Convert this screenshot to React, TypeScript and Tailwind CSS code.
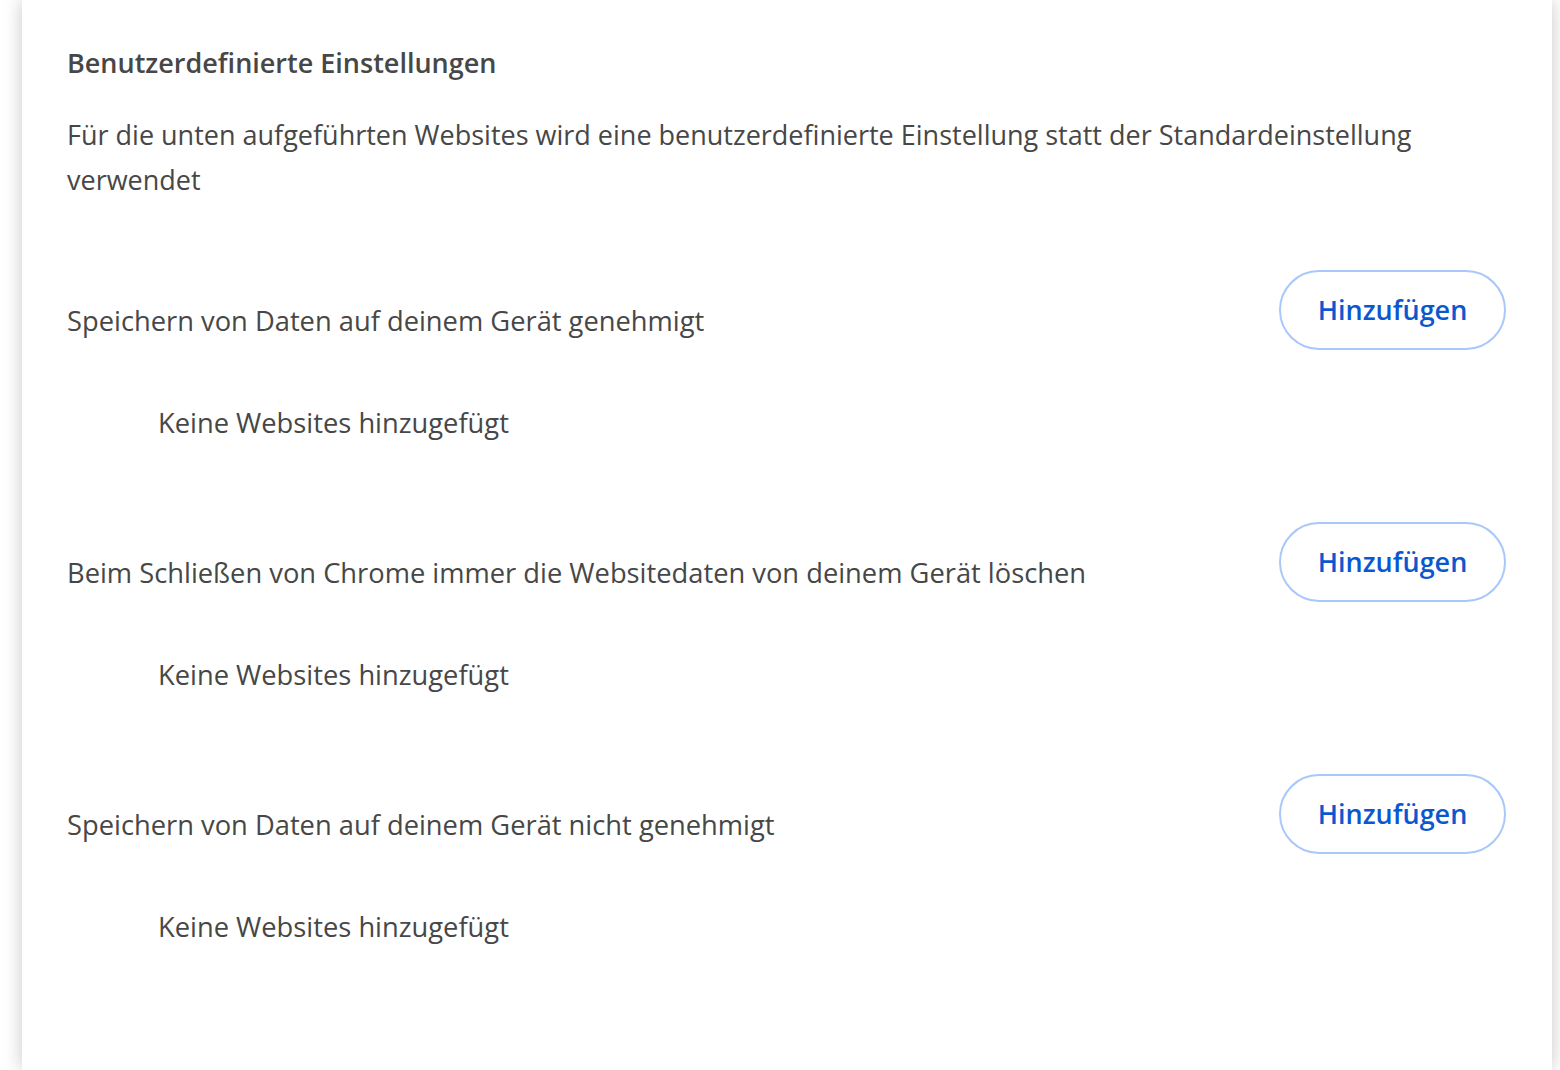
import React from 'react'

const SECTIONS = [
  'Speichern von Daten auf deinem Gerät genehmigt',
  'Beim Schließen von Chrome immer die Websitedaten von deinem Gerät löschen',
  'Speichern von Daten auf deinem Gerät nicht genehmigt',
]

export default function App() {
  return (
    <div
      className="min-h-[1070px] overflow-hidden bg-white pl-[22px] pr-[8px] text-[#474747]"
      style={{ fontFamily: '"Open Sans", "Noto Sans", sans-serif' }}
    >
      <div className="min-h-[1070px] bg-white pl-[45px] pr-[46px] pt-[43px] shadow-[0_0_18px_rgba(0,0,0,0.22)]">
        <h2 className="h-[40px] text-[27px] font-semibold leading-[40px] text-[#474747]">
          Benutzerdefinierte Einstellungen
        </h2>
        <p className="mt-[29px] pr-[60px] text-[27px] leading-[45px]">
          Für die unten aufgeführten Websites wird eine benutzerdefinierte Einstellung statt der
          Standardeinstellung verwendet
        </p>

        {SECTIONS.map((label, i) => (
          <section key={label} className={i === 0 ? 'mt-[68px]' : 'mt-[77px]'}>
            <div className="flex h-[80px] items-center justify-between">
              <span className="pt-[20px] text-[27.3px] leading-[45px]">{label}</span>
              <button className="h-[80px] w-[227px] rounded-full border-2 border-[#a8c7fa] text-[27px] font-semibold text-[#0b57d0]">
                Hinzufügen
              </button>
            </div>
            <div className="mt-[50px] h-[45px] pl-[91px] text-[27.3px] leading-[45px]">
              Keine Websites hinzugefügt
            </div>
          </section>
        ))}
      </div>
    </div>
  )
}
